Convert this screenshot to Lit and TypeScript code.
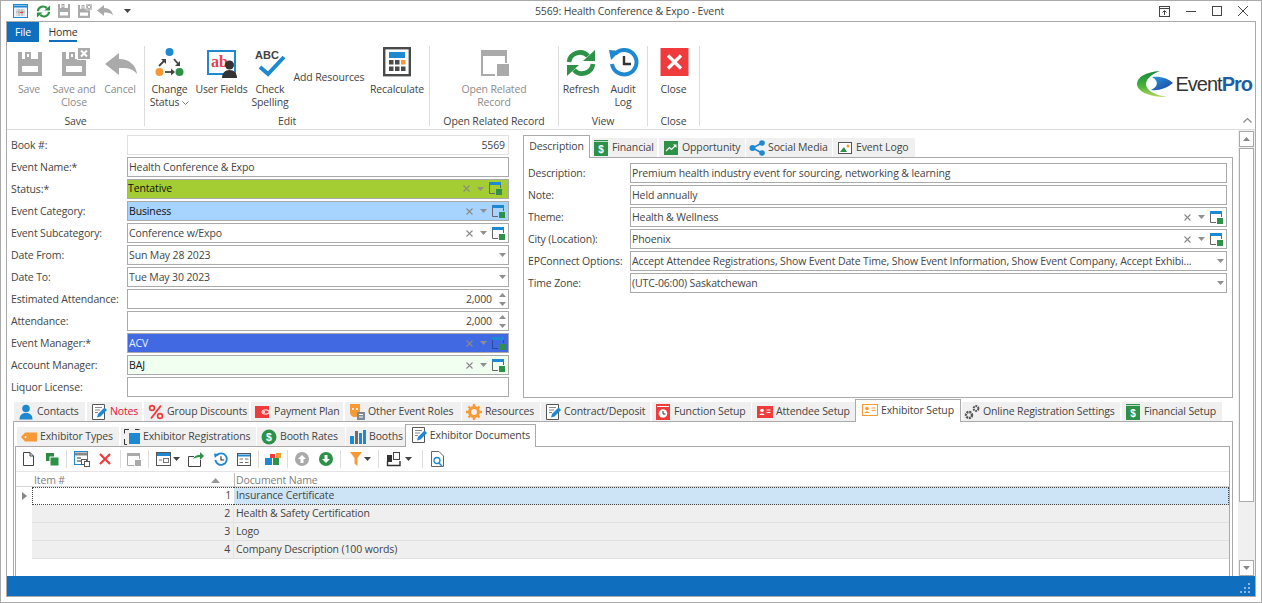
import { LitElement, html, css, svg } from "lit";
import { customElement } from "lit/decorators.js";

const ic = (w: number, h: number, body: any, vb?: string) =>
  html`<svg class="ic" width=${w} height=${h} viewBox=${vb || `0 0 ${w} ${h}`}>${body}</svg>`;

const G = "#aaaaaa", GR = "#2d9148", BL = "#1e88d0", RD = "#ef3b3b", OR = "#f79a35";

const floppy = (c: string) => svg`<path fill=${c} d="M0 0H24V24H0Z"/><path fill="#fff" d="M4 0H20V7H4ZM4 14H20V20H4Z"/><path fill=${c} d="M7 0H13V7H7Z"/><path fill="#fff" d="M9 2H11V5H9Z"/>`;
const saveL = ic(32, 32, svg`<g transform="translate(5 5)">${floppy(G)}</g>`);
const saveCloseL = ic(34, 32, svg`<g transform="translate(5 5)">${floppy(G)}</g><path fill=${G} stroke="#fff" d="M20.500 .5H33.500V12.500H20.500Z"/><path stroke="#fff" stroke-width="2" d="M24 3.500L30 9.500M30 3.500L24 9.500"/>`);
const undoPath = "M0 11L14 0V6C24 6 31 12 32 21C27 15 22 15 14 15V22Z";
const cancelL = ic(34, 32, svg`<g transform="translate(2 6)"><path fill=${G} d=${undoPath}/></g>`);
const arrow = (x1: number, y1: number, x2: number, y2: number) => svg`<path d="M${x1} ${y1}L${x2} ${y2}" stroke="#444" stroke-width="1.8"/>`;
const changeL = ic(33, 32, svg`
  <circle cx="16.5" cy="5" r="4" fill=${BL}/><circle cx="6.5" cy="25" r="4" fill=${OR}/><circle cx="26.5" cy="25" r="4" fill=${GR}/>
  ${arrow(6, 19, 12, 13)}<path d="M8 12H13V17Z" fill="#444"/>
  ${arrow(21, 12, 26, 18)}<path d="M27 14V19H22Z" fill="#444"/>
  ${arrow(12, 25, 19, 25)}<path d="M18 21.5L22 25L18 28.5Z" fill="#444"/>`);
const userL = ic(34, 32, svg`
  <rect x="3" y="4" width="27" height="23" fill="#fff" stroke=${BL} stroke-width="2"/>
  <text x="6" y="20" font-family="Liberation Serif" font-size="16" font-weight="700" fill="#e8404a">ab</text>
  <circle cx="24.5" cy="18" r="4.5" fill="#333"/><path d="M17 31C17 26 20 23 24.5 23S32 26 32 31Z" fill="#333"/>`);
const checkL = ic(33, 32, svg`
  <text x="1" y="11.5" font-family="Liberation Sans" font-size="11" font-weight="700" fill="#444">ABC</text>
  <path d="M6 20L14 27L30 10" fill="none" stroke=${BL} stroke-width="4"/>`);
const recalcL = ic(32, 32, svg`
  <rect x="3.2" y="1.2" width="25.6" height="27" fill="#fff" stroke="#4a4a4a" stroke-width="2.4"/>
  <rect x="8" y="5" width="16" height="6" fill=${BL}/>
  ${[8, 14, 20].map((x, i) => svg`<rect x=${x} y="13" width="4.5" height="4.5" fill=${i == 2 ? OR : "#4a4a4a"}/><rect x=${x} y="19.5" width="4.5" height="4.5" fill="#4a4a4a"/>`)}`);
const openL = ic(32, 32, svg`
  <path fill=${G} d="M3 3H29V9H3Z"/><path fill="none" stroke=${G} stroke-width="2" d="M4 9V28H17M28 9V16"/>
  <rect x="19" y="17" width="12" height="12" fill=${G}/>`);
const refreshI = (s: number) => ic(s, s, svg`
  <path d="M4 14A11 11 0 0 1 23 8" fill="none" stroke=${GR} stroke-width="4.6"/><path d="M30 2V13H18Z" fill=${GR}/>
  <path d="M28 16A11 11 0 0 1 9 22" fill="none" stroke=${GR} stroke-width="4.6"/><path d="M2 28V17H14Z" fill=${GR}/>`, "0 0 32 30");
const auditI = (s: number, hand = "#333") => ic(s, s, svg`
  <path d="M8 6A12.3 12.3 0 1 1 5 16" fill="none" stroke=${BL} stroke-width="4"/>
  <path d="M2 2L13 3L4 12Z" fill=${BL}/>
  <path d="M17 8V16H24" fill="none" stroke=${hand} stroke-width="2.4"/>`, "0 0 32 30");
const closeL = ic(32, 32, svg`<rect x="2.5" y="1" width="28" height="28" fill=${RD}/><path d="M10 8.500L23 21.500M23 8.500L10 21.500" stroke="#fff" stroke-width="3.200"/>`);

const winIcon = ic(13, 13, svg`<path fill=${BL} d="M0 0H12V3H0Z"/><path fill="none" stroke="#666" d="M.5 3V11.500H6M11.500 3V6"/><rect x="7" y="7" width="6" height="6" fill=${GR}/>`);
const winIconDim = ic(13, 13, svg`<path fill=${BL} d="M0 0H12V3H0Z"/><path fill="none" stroke="#2a4a9a" d="M.5 3V11.500H6M11.500 3V6"/><rect x="7" y="7" width="6" height="6" fill=${GR}/>`);
const clearI = ic(7, 7, svg`<path d="M.5 .5L6.500 6.500M6.500 .5L.5 6.500" stroke="#8a8a8a" stroke-width="1.100"/>`);
const ddI = ic(7, 4, svg`<path d="M0 0H7L3.500 4Z" fill="#8f8f8f"/>`);
const ddDark = ic(7, 4, svg`<path d="M0 0H7L3.500 4Z" fill="#444"/>`);
const spinI = ic(7, 13, svg`<path d="M0 4L3.500 0L7 4Z" fill="#8f8f8f"/><path d="M0 9H7L3.500 13Z" fill="#8f8f8f"/>`);

const noteI = (pen = BL) => ic(16, 16, svg`<path fill="#fff" stroke="#555" d="M1.500 .5H13.500V15.500H1.500Z"/><path stroke="#888" d="M4 3.500H11M4 6H9M4 8.500H7"/><path d="M6 13.500L7 10L13.500 3.500L16 6L9.500 12.500Z" fill=${pen}/>`);
const idCard = (c: string, fill: boolean) => ic(16, 16, svg`<rect x=".5" y="2.500" width="15" height="11" fill=${fill ? c : "#fff"} stroke=${c}/><circle cx="5" cy="6.500" r="1.800" fill=${fill ? "#fff" : c}/><path d="M2.500 11C2.500 9 7.500 9 7.500 11Z" fill=${fill ? "#fff" : c}/><path d="M9.500 6H13.500M9.500 8.500H13.500" stroke=${fill ? "#fff" : c} stroke-width="1.200"/>`);
const moneyDoc = ic(16, 16, svg`<rect x="1" y="0" width="14" height="16" fill=${GR}/><path d="M1 1.500H15" stroke="#fff" stroke-width=".7"/><text x="8" y="13" text-anchor="middle" font-family="Liberation Sans" font-size="10" font-weight="700" fill="#fff">$</text>`);

const tabIcons: Record<string, any> = {
  financial: moneyDoc,
  opportunity: ic(16, 16, svg`<rect x="1" y="1" width="14" height="14" fill=${GR}/><path d="M3 11L6.500 7.500L8.500 9.500L12.500 5.500" fill="none" stroke="#fff" stroke-width="1.200"/><path d="M10 4.500H13.500V8Z" fill="#fff"/>`),
  social: ic(16, 16, svg`<path d="M13 3L3.500 8L13 13" fill="none" stroke=${BL} stroke-width="1.600"/><circle cx="13" cy="3" r="2.800" fill=${BL}/><circle cx="3.500" cy="8" r="3" fill=${BL}/><circle cx="13" cy="13" r="2.800" fill=${BL}/>`),
  logo: ic(16, 16, svg`<rect x="1.500" y="2.500" width="13" height="11" fill="#fff" stroke="#555"/><path d="M3 12L7 7L10 12Z" fill=${GR}/><circle cx="11" cy="6" r="1.500" fill=${OR}/>`),
  contacts: ic(16, 16, svg`<circle cx="8" cy="4.500" r="3.800" fill=${BL}/><path d="M1.500 15.500C1.500 10.500 4.500 9 8 9S14.500 10.500 14.500 15.500Z" fill=${BL}/>`),
  notes: noteI(),
  percent: ic(16, 16, svg`<circle cx="4" cy="4" r="2.400" fill="none" stroke=${RD} stroke-width="1.700"/><circle cx="12" cy="12" r="2.400" fill="none" stroke=${RD} stroke-width="1.700"/><path d="M13 1.500L3 14.500" stroke=${RD} stroke-width="1.900"/>`),
  wallet: ic(16, 16, svg`<rect x="0" y="2" width="14" height="12" fill=${RD}/><rect x="7" y="6" width="7" height="4" rx="2" fill="none" stroke="#fff"/><circle cx="9" cy="8" r="1" fill="#fff"/>`),
  masks: ic(16, 16, svg`<path d="M1 0H11V8C11 12 8 13 6 13C3 13 1 11 1 8Z" fill=${OR}/><circle cx="4" cy="5" r="1" fill="#fff"/><circle cx="8" cy="5" r="1" fill="#fff"/><rect x="8" y="8" width="8" height="8" fill="#7d8a96"/><path d="M10 10.500H14M10 13H14" stroke="#fff"/>`),
  gear: ic(16, 16, svg`<circle cx="8" cy="8" r="4.500" fill="none" stroke=${OR} stroke-width="3"/><path d="M8 0V16M0 8H16M2.500 2.500L13.500 13.500M13.500 2.500L2.500 13.500" stroke=${OR} stroke-width="2.400" stroke-dasharray="3 10"/>`),
  contract: noteI(),
  func: ic(16, 16, svg`<rect x="1" y="0" width="14" height="16" fill=${RD}/><rect x="2" y="2" width="12" height="1" fill="#fff"/><circle cx="8" cy="9.500" r="4.300" fill="#fff"/><path d="M8 7V10H10.500" fill="none" stroke="#333"/>`),
  attendee: idCard(RD, true),
  exhibitor: idCard(OR, false),
  gears: ic(16, 16, svg`<circle cx="5" cy="11" r="3" fill="none" stroke="#555" stroke-width="2.400" stroke-dasharray="2 .8"/><circle cx="12" cy="4.500" r="2.400" fill="none" stroke="#555" stroke-width="2" stroke-dasharray="1.700 .7"/>`),
  tag: ic(16, 16, svg`<path d="M0 8L4 3.500H16V12.500H4Z" fill=${OR}/><circle cx="4.500" cy="8" r="1" fill="#fff"/>`),
  regs: ic(16, 16, svg`<rect x="5" y="4" width="11" height="11" fill=${BL}/><path d="M.5 4.500V.5H5M11 .5H15.500M.5 10V15.500H3" fill="none" stroke="#333"/>`),
  rates: ic(16, 16, svg`<circle cx="8" cy="8" r="7.500" fill=${GR}/><text x="8" y="12" text-anchor="middle" font-family="Liberation Sans" font-size="10.500" font-weight="700" fill="#fff">$</text>`),
  booths: ic(16, 16, svg`<rect x="0" y="7" width="4" height="8" fill=${BL}/><rect x="5" y="2" width="3" height="13" fill="#333" opacity=".7"/><rect x="9" y="4" width="3" height="11" fill=${BL}/><rect x="13" y="1" width="3" height="14" fill=${BL}/>`),
  docs: noteI(),
};

const toolIcons: Record<string, any> = {
  new: ic(11, 14, svg`<path d="M.5 .5H7L10.500 4V13.500H.5Z M7 .5V4H10.500" fill="#fff" stroke="#444"/>`),
  copy: ic(13, 13, svg`<rect x="0" y="0" width="8" height="8" fill="#2f8a46"/><rect x="4" y="4" width="9" height="9" fill=${GR} stroke="#fff"/>`),
  gridcopy: ic(16, 16, svg`<rect x=".5" y=".5" width="13" height="13" fill="#fff" stroke=${BL}/><path d="M1 3H13" stroke="#888" stroke-width="3"/><path d="M3 7H7M3 10H7" stroke="#999" stroke-width="2"/><rect x="7.500" y="8.500" width="5" height="5" fill="#fff" stroke="#555"/><rect x="10.500" y="10.500" width="5" height="5" fill="#fff" stroke="#555"/>`),
  del: ic(12, 12, svg`<path d="M1 1L11 11M11 1L1 11" stroke=${RD} stroke-width="2.200"/>`),
  win: ic(14, 13, svg`<path fill=${G} d="M0 0H13V3H0Z"/><path fill="none" stroke=${G} d="M.5 3V12.500H7M12.500 3V6"/><rect x="8" y="7" width="6" height="6" fill=${G}/>`),
  windd: ic(15, 14, svg`<rect x=".5" y=".5" width="14" height="13" fill="#fff" stroke="#555"/><path d="M1 2.500H14" stroke=${BL} stroke-width="3"/><rect x="7.500" y="6.500" width="5" height="4" fill="none" stroke="#777"/><path d="M3 8H6" stroke="#777"/>`),
  export: ic(16, 15, svg`<path d="M.5 4.500H6M.5 4.500V14.500H12.500V8" fill="none" stroke="#444"/><path d="M5 7C7 3 10 3 12 3V0L16 4L12 8V5C9 5 7 6 5 7Z" fill=${GR}/>`),
  history: auditI(15),
  form: ic(14, 13, svg`<rect x=".5" y=".5" width="13" height="12" fill="#fff" stroke="#555"/><path d="M1 2.500H13" stroke=${BL} stroke-width="2"/><path d="M2.500 6H6M8 6H11.500M2.500 9.500H6M8 9.500H11.500" stroke="#777"/>`),
  blocks: ic(16, 12, svg`<rect x="0" y="5" width="7" height="7" fill=${BL}/><rect x="5" y="1" width="5" height="4" fill=${RD}/><rect x="8" y="5" width="6" height="7" fill=${GR}/><rect x="11" y="0" width="5" height="5" fill=${OR}/>`),
  up: ic(14, 14, svg`<circle cx="7" cy="7" r="7" fill=${G}/><path d="M7 3L11 7H8.500V11H5.500V7H3Z" fill="#fff"/>`),
  down: ic(14, 14, svg`<circle cx="7" cy="7" r="7" fill=${GR}/><path d="M7 11L3 7H5.500V3H8.500V7H11Z" fill="#fff"/>`),
  funnel: ic(12, 14, svg`<path d="M0 0H12L7.500 6V14L4.500 11.500V6Z" fill=${OR}/>`),
  layout: ic(16, 15, svg`<rect x="0" y="3" width="5" height="7" fill="#333"/><rect x="6.500" y=".5" width="6" height="7" fill="#fff" stroke="#444"/><path d="M.5 9V13.500H13V9" fill="none" stroke="#333" stroke-width="1.400"/>`),
  find: ic(13, 16, svg`<path d="M.5 .5H8L12.500 5V15.500H.5Z" fill="#fff" stroke="#666"/><circle cx="6" cy="9.500" r="3" fill="none" stroke=${BL} stroke-width="1.300"/><path d="M8 12L11 15" stroke=${BL} stroke-width="1.500"/>`),
};

type Field = { label: string; value?: string; kind?: string; tone?: string; req?: boolean; align?: string };
const leftFields: Field[] = [
  { label: "Book #:", value: "5569", kind: "plain", tone: "off", align: "right" },
  { label: "Event Name:", req: true, value: "Health Conference & Expo", kind: "plain" },
  { label: "Status:", req: true, value: "Tentative", kind: "lookup", tone: "status" },
  { label: "Event Category:", value: "Business", kind: "lookup", tone: "cat" },
  { label: "Event Subcategory:", value: "Conference w/Expo", kind: "lookup" },
  { label: "Date From:", value: "Sun May 28 2023", kind: "drop" },
  { label: "Date To:", value: "Tue May 30 2023", kind: "drop" },
  { label: "Estimated Attendance:", value: "2,000", kind: "spin", align: "right" },
  { label: "Attendance:", value: "2,000", kind: "spin", align: "right" },
  { label: "Event Manager:", req: true, value: "ACV", kind: "lookup", tone: "mgr" },
  { label: "Account Manager:", value: "BAJ", kind: "lookup", tone: "acct" },
  { label: "Liquor License:", value: "", kind: "plain" },
];
const rightFields: Field[] = [
  { label: "Description:", value: "Premium health industry event for sourcing, networking & learning", kind: "plain" },
  { label: "Note:", value: "Held annually", kind: "plain" },
  { label: "Theme:", value: "Health & Wellness", kind: "lookup" },
  { label: "City (Location):", value: "Phoenix", kind: "lookup" },
  { label: "EPConnect Options:", value: "Accept Attendee Registrations, Show Event Date Time, Show Event Information, Show Event Company, Accept Exhibi...", kind: "drop" },
  { label: "Time Zone:", value: "(UTC-06:00) Saskatchewan", kind: "drop" },
];

type Tab = { t: string; a: number; b: number; i?: string; on?: boolean; red?: boolean; pad?: number };
const rightTabs: Tab[] = [
  { t: "Description", a: 523, b: 590, on: true },
  { t: "Financial", a: 592, b: 657, i: "financial", pad: 1 },
  { t: "Opportunity", a: 659, b: 745, i: "opportunity" },
  { t: "Social Media", a: 746, b: 832, i: "social", pad: 3 },
  { t: "Event Logo", a: 833, b: 915, i: "logo", pad: 4 },
];
const mainTabs: Tab[] = [
  { t: "Contacts", a: 14, b: 85, i: "contacts" },
  { t: "Notes", a: 87, b: 142, i: "notes", red: true },
  { t: "Group Discounts", a: 144, b: 249, i: "percent" },
  { t: "Payment Plan", a: 251, b: 343, i: "wallet" },
  { t: "Other Event Roles", a: 345, b: 461, i: "masks" },
  { t: "Resources", a: 462, b: 540, i: "gear" },
  { t: "Contract/Deposit", a: 541, b: 650, i: "contract" },
  { t: "Function Setup", a: 652, b: 751, i: "func", pad: 3 },
  { t: "Attendee Setup", a: 752, b: 855, i: "attendee", pad: 5 },
  { t: "Exhibitor Setup", a: 855, b: 961, i: "exhibitor", on: true },
  { t: "Online Registration Settings", a: 962, b: 1120, i: "gears", pad: 2 },
  { t: "Financial Setup", a: 1122, b: 1222, i: "financial", pad: 3 },
];
const subTabs: Tab[] = [
  { t: "Exhibitor Types", a: 17, b: 119, i: "tag" },
  { t: "Exhibitor Registrations", a: 121, b: 256, i: "regs", pad: 3 },
  { t: "Booth Rates", a: 257, b: 345, i: "rates" },
  { t: "Booths", a: 346, b: 405, i: "booths" },
  { t: "Exhibitor Documents", a: 405, b: 536, i: "docs", on: true },
];

type Btn = { l: string[]; w: number; icon?: any; off?: boolean; chev?: boolean };
type Group = { name: string; w: number; pad: number; gap: number; items: Btn[] };
const groups: Group[] = [
  { name: "Save", w: 138, pad: 4, gap: 2, items: [
    { l: ["Save"], w: 36, icon: saveL, off: true },
    { l: ["Save and", "Close"], w: 50, icon: saveCloseL, off: true },
    { l: ["Cancel"], w: 38, icon: cancelL, off: true },
  ]},
  { name: "Edit", w: 285, pad: 2, gap: 2, items: [
    { l: ["Change", "Status"], w: 45, icon: changeL, chev: true },
    { l: ["User Fields"], w: 55, icon: userL },
    { l: ["Check", "Spelling"], w: 38, icon: checkL },
    { l: ["Add Resources"], w: 76 },
    { l: ["Recalculate"], w: 56, icon: recalcL },
  ]},
  { name: "Open Related Record", w: 129, pad: 0, gap: 0, items: [
    { l: ["Open Related", "Record"], w: 128, icon: openL, off: true },
  ]},
  { name: "View", w: 89, pad: 2, gap: 3, items: [
    { l: ["Refresh"], w: 40, icon: refreshI(32) },
    { l: ["Audit", "Log"], w: 38, icon: auditI(32) },
  ]},
  { name: "Close", w: 52, pad: 0, gap: 0, items: [
    { l: ["Close"], w: 51, icon: closeL },
  ]},
];

type Tool = { x: number; w: number; k?: string; dd?: boolean; sep?: boolean };
const tools: Tool[] = [
  { x: 23, w: 11, k: "new" }, { x: 46, w: 13, k: "copy" }, { x: 66, w: 1, sep: true },
  { x: 74, w: 16, k: "gridcopy" }, { x: 99, w: 12, k: "del" }, { x: 120, w: 1, sep: true },
  { x: 127, w: 14, k: "win" }, { x: 148, w: 1, sep: true },
  { x: 156, w: 24, k: "windd", dd: true }, { x: 188, w: 16, k: "export" }, { x: 213, w: 15, k: "history" },
  { x: 237, w: 14, k: "form" }, { x: 258, w: 1, sep: true }, { x: 265, w: 16, k: "blocks" },
  { x: 287, w: 1, sep: true }, { x: 295, w: 14, k: "up" }, { x: 319, w: 14, k: "down" },
  { x: 340, w: 1, sep: true }, { x: 350, w: 21, k: "funnel", dd: true }, { x: 378, w: 1, sep: true },
  { x: 387, w: 29, k: "layout", dd: true }, { x: 422, w: 1, sep: true }, { x: 431, w: 13, k: "find" },
];

const docs = ["Insurance Certificate", "Health & Safety Certification", "Logo", "Company Description (100 words)"];

@customElement("app-root")
export class AppRoot extends LitElement {
  static styles = css`
    :host { display: block; width: 1262px; height: 603px; font-family: "Open Sans", "Liberation Sans", sans-serif; font-size: 10.5px; line-height: 14px; letter-spacing: -.13px; color: #444; background: #fff; }
    * { box-sizing: border-box; }
    svg.ic { display: block; flex: none; overflow: visible; letter-spacing: 0; }
    .win { width: 1262px; height: 603px; display: flex; flex-direction: column; border: 1px solid #aaa; padding: 0 5px 5px; overflow: hidden; }
    .title { height: 20px; display: grid; grid-template-columns: 1fr auto 1fr; align-items: center; margin: 0 -5px; flex: none; }
    .ttl { margin-left: -3px; }
    .qat { display: flex; align-items: center; padding-left: 12px; }
    .qat > svg:nth-child(1) { margin-right: 8px; }
    .qat > svg:nth-child(2) { margin-right: 7px; }
    .qat > svg:nth-child(3) { margin-right: 8px; }
    .qat > svg:nth-child(4) { margin-right: 5px; }
    .qat > svg:nth-child(5) { margin-right: 11px; }
    .ctrl { display: flex; justify-content: flex-end; align-items: center; gap: 16px; padding-right: 13px; }
    .frame { flex: 1; border: 1px solid #aaa; display: flex; flex-direction: column; min-height: 0; }
    .rtabs { height: 20px; display: flex; flex: none; }
    .file { width: 32px; background: #106ebe; color: #fff; display: flex; align-items: center; justify-content: center; }
    .home { margin-left: 10px; width: 28px; display: flex; align-items: center; justify-content: center; border-bottom: 2px solid #106ebe; color: #333; white-space: nowrap; padding-top: 1px; }
    .ribbon { height: 88px; flex: none; border-bottom: 1px solid #ddd; padding-top: 4px; display: flex; }
    .group { height: 80px; border-right: 1px solid #ddd; display: flex; flex-direction: column; flex: none; }
    .btns { height: 69px; display: flex; flex: none; }
    .rbtn { display: flex; flex-direction: column; align-items: center; flex: none; }
    .rbtn.noicon { justify-content: flex-start; padding-top: 25px; }
    .rbtn .art { height: 37px; padding-top: 1px; display: flex; justify-content: center; width: 100%; }
    .rbtn .ln { line-height: 13px; height: 13px; white-space: nowrap; text-align: center; display: flex; align-items: center; gap: 3px; }
    .off { color: #8c8c8c; }
    .gname { line-height: 13px; height: 13px; flex: none; text-align: center; white-space: nowrap; }
    .brand { margin-left: auto; display: flex; flex-direction: column; align-items: flex-end; padding-right: 3px; }
    .logo { margin-top: 25px; display: flex; align-items: center; gap: 1px; height: 26px; font-family: "Liberation Sans", sans-serif; font-size: 20px; letter-spacing: -1px; line-height: 26px; color: #333; }
    .logo b { color: #1c5fa8; font-weight: 700; }
    .chev { margin-top: 21px; }
    .body { flex: 1; display: flex; min-height: 0; }
    .main { width: 1231px; display: flex; flex-direction: column; flex: none; }
    .top { height: 268px; padding-top: 5px; display: flex; flex: none; }
    .form { width: 516px; padding-left: 4px; display: flex; flex-direction: column; gap: 2px; flex: none; }
    .row { display: flex; height: 20px; align-items: center; flex: none; }
    .lab { flex: none; white-space: nowrap; }
    .form .lab { width: 116px; }
    .form .inp { width: 382px; }
    .inp { height: 20px; border: 1px solid #aaa; display: flex; align-items: center; padding: 0 2px 0 1px; background: #fff; overflow: hidden; }
    .inp .v { flex: 1; white-space: nowrap; overflow: hidden; min-width: 0; color: #444; }
    .inp.right .v { text-align: right; padding-right: 1px; }
    .inp.off { border-color: #e0e0e0; }
    .inp.status { background: #a4cd33; } .inp.status .v { color: #111; }
    .inp.cat { background: #a6d3ff; } .inp.cat .v { color: #111; }
    .inp.mgr { background: #4169e1; } .inp.mgr .v { color: #e8eeff; }
    .inp.acct { background: #f0fff0; } .inp.acct .v { color: #111; }
    .tools { display: flex; align-items: center; gap: 7px; flex: none; }
    .tools.lk { padding-right: 1px; }
    .tools.lk svg:last-child { margin-left: -2px; }
    .tools.sp { padding-left: 6px; }
    .right { width: 710px; flex: none; }
    .rpanel { height: 241px; border: 1px solid #aaa; padding: 5px 5px 0 4px; display: flex; flex-direction: column; gap: 2px; }
    .rpanel .lab { width: 102px; }
    .rpanel .inp { flex: 1; min-width: 0; }
    .strip { display: flex; align-items: flex-end; flex: none; height: 22px; }
    .tab { height: 19px; background: #f0f0f0; display: flex; align-items: center; gap: 3px; padding-left: 4px; white-space: nowrap; flex: none; color: #444; overflow: hidden; }
    .tab .tx { margin-top: -1px; }
    .tab.red .tx { color: #ee1133; }
    .tab.on { height: 23px; margin-bottom: -1px; background: #fff; border: 1px solid #aaa; border-bottom: 0; position: relative; z-index: 1; justify-content: center; padding-left: 2px; padding-right: 2px; padding-bottom: 2px; }
    .tab.on .tx { margin-top: 0; }
    .low { margin-top: 1px; margin-left: 6px; width: 1220px; flex: 1; display: flex; flex-direction: column; min-height: 0; }
    .lowpanel { flex: 1; border: 1px solid #aaa; border-bottom: 0; padding: 2px 2px 0 1px; display: flex; flex-direction: column; min-height: 0; }
    .subpanel { flex: 1; border: 1px solid #aaa; border-bottom: 0; display: flex; flex-direction: column; min-height: 0; }
    .bar { height: 24px; display: flex; align-items: center; flex: none; }
    .tool { display: flex; align-items: center; gap: 2px; flex: none; }
    .sep { width: 1px; height: 18px; background: #ddd; flex: none; }
    .ghead { height: 16px; display: grid; grid-template-columns: 16px 202px 1fr; border-top: 1px solid #e4e4e4; border-bottom: 1px solid #d4d4d4; flex: none; color: #808080; }
    .ghead > div { display: flex; align-items: center; padding-left: 2px; padding-bottom: 1px; }
    .ghead .sort { margin-left: auto; margin-right: 14px; }
    .ghead .doc { border-left: 1px solid #bbb; margin: 1px 0; padding-left: 1px; }
    .grow { height: 18px; display: grid; grid-template-columns: 16px 202px 1fr; flex: none; }
    .grow .ind { display: flex; align-items: center; justify-content: center; background: #fff; }
    .grow .num { background: #efefef; text-align: right; padding-right: 3px; line-height: 17px; border-bottom: 1px solid #e0e0e0; border-right: 1px solid #e4e4e4; }
    .grow .name { background: #efefef; padding-left: 2px; line-height: 17px; border-bottom: 1px solid #e0e0e0; white-space: nowrap; }
    .grow.act .num { background: #fff; border: 1px dotted #444; border-right: 0; line-height: 14px; padding-right: 3px; }
    .grow.act .name { background: #cde4f7; border: 1px dotted #444; border-left: 0; line-height: 14px; }
    .scroll { width: 17px; background: #f0f0f0; flex: none; display: flex; flex-direction: column; align-items: center; padding-top: 1px; }
    .sb { width: 15px; border: 1px solid #aaa; background: #fff; flex: none; display: flex; align-items: center; justify-content: center; }
    .sb.a { height: 16px; }
    .sb.t { height: 354px; margin-top: 1px; }
    .sb.b { height: 16px; margin-top: auto; }
    .status { height: 20px; flex: none; background: #106ebe; display: flex; justify-content: flex-end; align-items: flex-end; padding: 0 5px 3px 0; }
  `;

  field(f: Field) {
    const tools = f.kind === "lookup"
      ? html`<div class="tools lk">${clearI}${ddI}${f.tone === "mgr" ? winIconDim : winIcon}</div>`
      : f.kind === "drop" ? html`<div class="tools">${ddI}</div>`
      : f.kind === "spin" ? html`<div class="tools sp">${spinI}</div>` : "";
    const req = f.req ? "*" : "";
    return html`<div class="row">
      <div class="lab">${f.label}${req}</div>
      <div class="inp ${f.tone || ""} ${f.align || ""}"><div class="v">${f.value}</div>${tools}</div>
    </div>`;
  }

  tabs(list: Tab[], origin: number) {
    let end = origin;
    return list.map((t) => {
      const m = t.a - end;
      end = t.b;
      const pad = t.pad !== undefined ? `;padding-left:${t.pad}px` : "";
      return html`<div class="tab ${t.on ? "on" : ""} ${t.red ? "red" : ""}" style="width:${t.b - t.a}px;margin-left:${m}px${pad}">
        ${t.i ? tabIcons[t.i] : ""}<span class="tx">${t.t}</span></div>`;
    });
  }

  toolbar() {
    let end = 16;
    return tools.map((t) => {
      const m = t.x - end;
      end = t.x + t.w;
      const st = `margin-left:${m}px;width:${t.w}px`;
      return t.sep
        ? html`<div class="sep" style=${st}></div>`
        : html`<div class="tool" style=${st}>${toolIcons[t.k!]}${t.dd ? ddDark : ""}</div>`;
    });
  }

  render() {
    return html`<div class="win">
      <div class="title">
        <div class="qat">
          ${ic(15, 14, svg`<rect x=".5" y=".5" width="14" height="13" fill="#eaf3fb" stroke="#1e88d0"/><path d="M1 2.500H14" stroke="#1e88d0" stroke-width="2"/><path d="M3 5H12V12H3Z" fill="#ddd"/><path d="M6 5V12M9 5V12M3 8H12" stroke="#999" stroke-width=".7"/><path d="M7 8.500H10" stroke="#e04040"/>`)}
          ${refreshI(15)}
          ${ic(12, 14, svg`<g transform="scale(.5 .58)">${floppy(G)}</g>`)}
          ${ic(14, 14, svg`<g transform="translate(0 1) scale(.5 .54)">${floppy(G)}</g><path fill=${G} stroke="#fff" stroke-width=".5" d="M8 0H14V6H8Z"/><path d="M9.500 1.500L12.500 4.500M12.500 1.500L9.500 4.500" stroke="#fff"/>`)}
          ${ic(16, 12, svg`<g transform="scale(.5)"><path fill=${G} d=${undoPath}/></g>`)}
          ${ic(7, 4, svg`<path d="M0 0H7L3.500 4Z" fill="#444"/>`)}
        </div>
        <div class="ttl">5569: Health Conference &amp; Expo - Event</div>
        <div class="ctrl">
          ${ic(11, 11, svg`<rect x=".5" y=".5" width="10" height="10" fill="none" stroke="#444"/><path d="M1 2.500H10M5.500 9V5M3.500 6.500L5.500 4.500L7.500 6.500" stroke="#444" fill="none"/>`)}
          ${ic(10, 10, svg`<path d="M0 5.500H10" stroke="#444"/>`)}
          ${ic(10, 10, svg`<rect x=".5" y=".5" width="9" height="9" fill="none" stroke="#444"/>`)}
          ${ic(10, 10, svg`<path d="M0 0L10 10M10 0L0 10" stroke="#444"/>`)}
        </div>
      </div>
      <div class="frame">
        <div class="rtabs"><div class="file">File</div><div class="home">Home</div></div>
        <div class="ribbon">
          ${groups.map((g) => html`<div class="group" style="width:${g.w}px">
            <div class="btns" style="padding-left:${g.pad}px;gap:${g.gap}px">
              ${g.items.map((b) => html`<div class="rbtn ${b.icon ? "" : "noicon"} ${b.off ? "off" : ""}" style="width:${b.w}px">
                ${b.icon ? html`<div class="art">${b.icon}</div>` : ""}
                ${b.l.map((x, i) => html`<div class="ln">${x}${b.chev && i === b.l.length - 1 ? ic(7, 4, svg`<path d="M.5 .5L3.500 3.500L6.500 .5" fill="none" stroke="#777"/>`) : ""}</div>`)}
              </div>`)}
            </div>
            <div class="gname">${g.name}</div>
          </div>`)}
          <div class="brand">
            <div class="logo">
              ${ic(38, 26, svg`
                <defs><linearGradient id="lg" x1="0" y1="0" x2="0" y2="1"><stop offset="0" stop-color="#128a3c"/><stop offset=".6" stop-color="#4cb33c"/><stop offset="1" stop-color="#b5d85a"/></linearGradient>
                <linearGradient id="lb" x1="0" y1="0" x2="1" y2="1"><stop offset="0" stop-color="#2a9ae0"/><stop offset="1" stop-color="#1b3f9a"/></linearGradient></defs>
                <path fill="url(#lg)" d="M23 0C9 1 0 6 0 13C0 20 11 26 30 26C17 24 9 19 9 13C9 8 15 3 23 0Z"/>
                <path fill="url(#lb)" d="M15 6C24 5 32 8 36 12C30 17 22 20 14 19C20 16 23 11 15 6Z"/>`)}
              <span>Event<b>Pro</b></span>
            </div>
            <div class="chev">${ic(9, 5, svg`<path d="M.5 4.500L4.500 .5L8.500 4.500" fill="none" stroke="#888" stroke-width="1.200"/>`)}</div>
          </div>
        </div>
        <div class="body">
          <div class="main">
            <div class="top">
              <div class="form">${leftFields.map((f) => this.field(f))}</div>
              <div class="right">
                <div class="strip">${this.tabs(rightTabs, 523)}</div>
                <div class="rpanel">${rightFields.map((f) => this.field(f))}</div>
              </div>
            </div>
            <div class="low">
              <div class="strip">${this.tabs(mainTabs, 13)}</div>
              <div class="lowpanel">
                <div class="strip">${this.tabs(subTabs, 15)}</div>
                <div class="subpanel">
                  <div class="bar">${this.toolbar()}</div>
                  <div class="ghead">
                    <div></div>
                    <div>Item #<span class="sort">${ic(9, 5, svg`<path d="M0 5L4.500 0L9 5Z" fill="#999"/>`)}</span></div>
                    <div class="doc">Document Name</div>
                  </div>
                  <div>
                    ${docs.map((d, i) => html`<div class="grow ${i === 0 ? "act" : ""}">
                      <div class="ind">${i === 0 ? ic(5, 8, svg`<path d="M0 0L5 4L0 8Z" fill="#888"/>`) : ""}</div>
                      <div class="num">${i + 1}</div>
                      <div class="name">${d}</div>
                    </div>`)}
                  </div>
                </div>
              </div>
            </div>
          </div>
          <div class="scroll">
            <div class="sb a">${ic(7, 4, svg`<path d="M0 4L3.500 0L7 4Z" fill="#888"/>`)}</div>
            <div class="sb t"></div>
            <div class="sb b">${ic(7, 4, svg`<path d="M0 0H7L3.500 4Z" fill="#888"/>`)}</div>
          </div>
        </div>
        <div class="status">${ic(10, 10, svg`<path fill="#8fb7dc" d="M8 0H10V2H8ZM4 4H6V6H4ZM8 4H10V6H8ZM0 8H2V10H0ZM4 8H6V10H4ZM8 8H10V10H8Z"/>`)}</div>
      </div>
    </div>`;
  }
}
